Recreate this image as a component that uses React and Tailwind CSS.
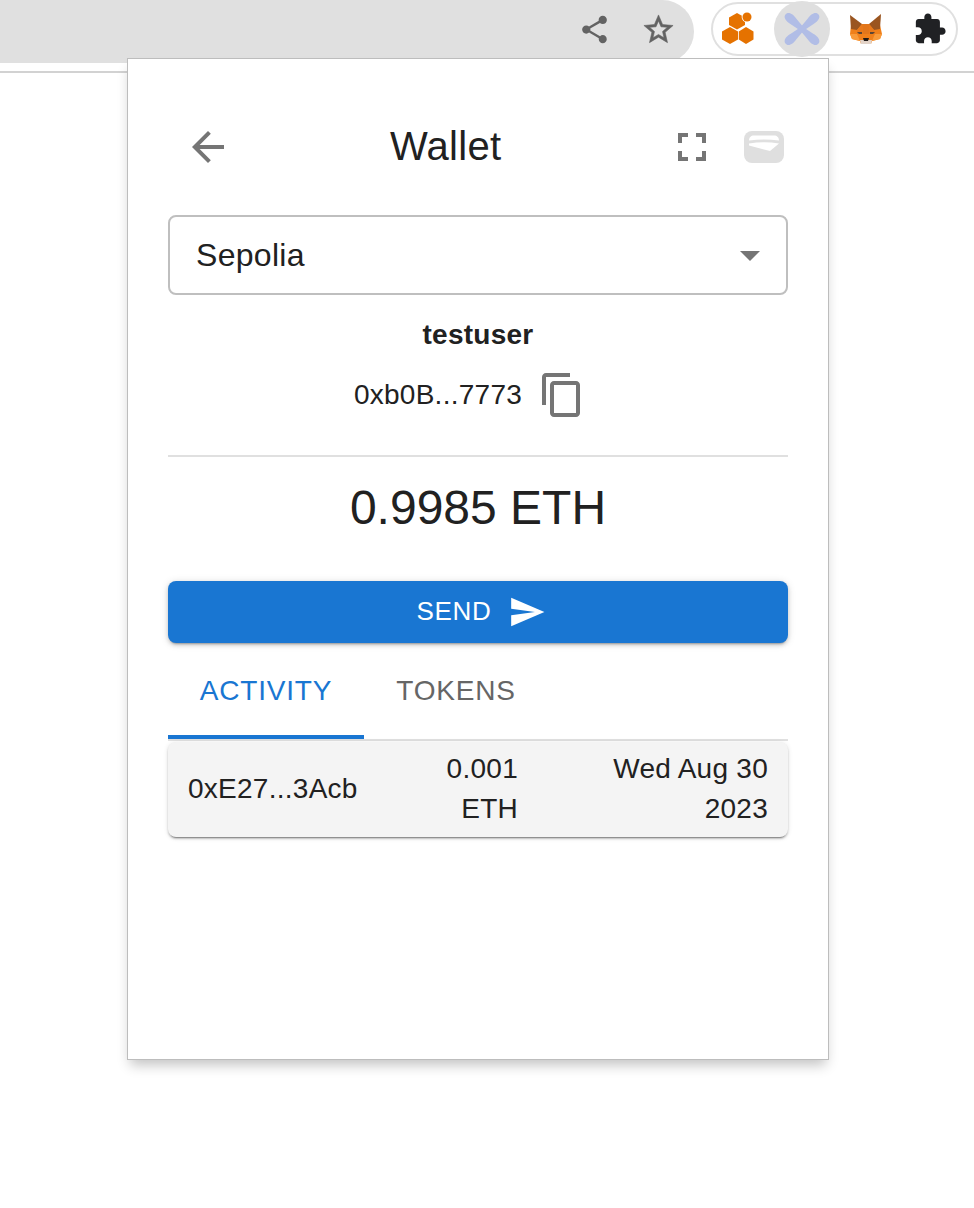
import React from "react";

const Icon = ({ d, className, bold }) => (
  <svg viewBox="0 0 24 24" className={className} fill="currentColor" stroke={bold ? "currentColor" : "none"} strokeWidth={bold ? 0.4 : 0}>
    <path d={d} />
  </svg>
);

const P = {
  back: "M20 11H7.83l5.59-5.59L12 4l-8 8 8 8 1.41-1.41L7.83 13H20v-2z",
  full: "M7 14H5v5h5v-2H7v-3zm-2-4h2V7h3V5H5v5zm12 7h-3v2h5v-5h-2v3zM14 5v2h3v3h2V5h-5z",
  copy: "M16 1H4c-1.1 0-2 .9-2 2v14h2V3h12V1zm3 4H8c-1.1 0-2 .9-2 2v14c0 1.1.9 2 2 2h11c1.1 0 2-.9 2-2V7c0-1.1-.9-2-2-2zm0 16H8V7h11v14z",
  send: "M2.01 21 23 12 2.01 3 2 10l15 2-15 2z",
  share:
    "M18 16.08c-.76 0-1.44.3-1.96.77L8.91 12.7c.05-.23.09-.46.09-.7s-.04-.47-.09-.7l7.05-4.11c.54.5 1.25.81 2.04.81 1.66 0 3-1.34 3-3s-1.34-3-3-3-3 1.34-3 3c0 .24.04.47.09.7L8.04 9.81C7.5 9.31 6.79 9 6 9c-1.66 0-3 1.34-3 3s1.34 3 3 3c.79 0 1.5-.31 2.04-.81l7.12 4.16c-.05.21-.08.43-.08.65 0 1.61 1.31 2.92 2.92 2.92s2.92-1.31 2.92-2.92c0-1.61-1.31-2.92-2.92-2.92z",
  star: "M22 9.24l-7.19-.62L12 2 9.19 8.63 2 9.24l5.46 4.73L5.82 21 12 17.27 18.18 21l-1.63-7.03L22 9.24zM12 15.4l-3.76 2.27 1-4.28-3.32-2.88 4.38-.38L12 6.1l1.71 4.04 4.38.38-3.32 2.88 1 4.28L12 15.4z",
  puzzle:
    "M20.5 11H19V7c0-1.1-.9-2-2-2h-4V3.5C13 2.12 11.88 1 10.5 1S8 2.12 8 3.5V5H4c-1.1 0-1.99.9-1.99 2v3.8H3.5c1.49 0 2.7 1.21 2.7 2.7s-1.21 2.7-2.7 2.7H2V20c0 1.1.9 2 2 2h3.8v-1.5c0-1.49 1.21-2.7 2.7-2.7 1.49 0 2.7 1.21 2.7 2.7V22H17c1.1 0 2-.9 2-2v-4h1.5c1.38 0 2.5-1.12 2.5-2.5S21.88 11 20.5 11z",
};

const HexLogo = () => (
  <svg viewBox="0 0 36 36" className="h-9 w-9" fill="#e57200">
    <polygon points="17,2 25,6.500 25,14 17,18.500 9,14 9,6.500" />
    <polygon points="10,16 18,20.500 18,28.500 10,33 2,28.500 2,20.500" />
    <polygon points="26,16 33.500,20.500 33.500,28.500 26,33 18.800,28.500 18.800,20.500" />
    <circle cx="27" cy="6" r="5.400" fill="#ffffff" />
    <circle cx="27" cy="6" r="4.500" />
  </svg>
);

const ARM = "M-22 0C-22-4.500-16-5-12-4L0-2.200 12-4C16-5 22-4.500 22 0 22 4.500 16 5 12 4L0 2.200-12 4C-16 5-22 4.500-22 0z";

const XLogo = () => (
  <svg viewBox="-20 -18 40 36" className="h-9 w-10" fill="#b1bde6">
    <path d={ARM} transform="rotate(42)" />
    <path d={ARM} transform="rotate(-42)" />
  </svg>
);

const Fox = () => (
  <svg viewBox="0 0 34 30" className="h-[30px] w-[34px]">
    <polygon points="12,10 21,10 31,11 33,20 31,25 23,27 22,30 12,30 11,27 3,25 1,20 2,11" fill="#f0801a" />
    <polygon points="1,1 13,10 8,16 2,15" fill="#9a5520" />
    <polygon points="32,0 20,10 25,16 31,15" fill="#9a5520" />
    <polygon points="13,10 20,10 20,20 14,20" fill="#e2761b" />
    <polygon points="8,16 13,10 14,20 8,20" fill="#e8791c" />
    <polygon points="25,16 20,10 20,20 26,20" fill="#e8791c" />
    <polygon points="8,18 13,18 13,20 10,20" fill="#5b4636" />
    <polygon points="26,18 21,18 21,20 24,20" fill="#5b4636" />
    <polygon points="1,20 3,25 11,27 8,20" fill="#f99b3a" />
    <polygon points="33,20 31,25 23,27 26,20" fill="#f99b3a" />
    <polygon points="11,26 23,26 22,30 12,30" fill="#e2d3c8" />
    <polygon points="14,24 20,24 19,27 15,27" fill="#1f1a17" />
  </svg>
);

const WalletIcon = () => (
  <svg viewBox="0 0 40 32" className="h-8 w-10">
    <rect width="40" height="32" rx="8" fill="#dfdfdf" />
    <path d="M5 9.500C5 6.500 7 4.500 10 4.500H30C33 4.500 35 6.500 35 9.500Q20 7.500 5 9.500z" fill="#ffffff" />
    <path d="M5 12.500Q20 10 35 12.500L26 20 5 14.500z" fill="#ffffff" />
  </svg>
);

export default function App() {
  return (
    <div className="relative h-[1208px] w-[974px] overflow-hidden bg-white font-['Liberation_Sans',Arial,sans-serif] text-[#212121]">
      <header className="flex h-[73px] items-start border-b-2 border-[#d2d2d2]">
        <div className="flex h-[63px] w-[694px] items-center justify-end gap-[30px] rounded-r-[34px] bg-[#e0e0e0] pr-[18px] pb-[4px] text-[#636363]">
          <Icon d={P.share} className="h-[33px] w-[33px]" />
          <Icon d={P.star} bold className="h-[35px] w-[35px]" />
        </div>
        <div className="mt-[2px] ml-[17px] flex h-[54px] w-[247px] items-center rounded-full border-2 border-[#e0e0e0] pl-[7px]">
          <div className="flex w-[54px] justify-start">
            <HexLogo />
          </div>
          <div className="flex h-14 w-14 shrink-0 items-center justify-center rounded-full bg-[#dfdfdf]">
            <XLogo />
          </div>
          <div className="ml-[19px]">
            <Fox />
          </div>
          <Icon d={P.puzzle} className="ml-[30px] h-[34px] w-[34px] text-[#202124]" />
        </div>
      </header>

      <main className="absolute top-[58px] left-[127px] flex h-[1002px] w-[702px] flex-col border border-[#bdbdbd] bg-white px-[40px] shadow-[0_8px_12px_-3px_rgba(0,0,0,0.24)]">
        <div className="mt-[64px] flex h-[48px] items-center">
          <Icon d={P.back} className="ml-[16px] h-12 w-12 text-[#757575]" />
          <h1 className="mb-[2px] ml-[158px] text-[40px] leading-[48px] font-normal tracking-[0.3px]">Wallet</h1>
          <Icon d={P.full} className="ml-[167px] h-12 w-12 text-[#757575]" />
          <div className="ml-[28px]">
            <WalletIcon />
          </div>
        </div>

        <div className="mt-[44px] flex h-[80px] items-center justify-between rounded-[8px] border-2 border-[#bfbfbf] pr-[26px] pl-[26px] text-[32px] tracking-[0.00938em]">
          <span>Sepolia</span>
          <span className="mt-[1px] h-0 w-0 border-x-[10px] border-t-[10px] border-x-transparent border-t-[#757575]"></span>
        </div>

        <div className="mt-[20px] text-center text-[28px] leading-[40px] font-bold tracking-[0.00938em]">testuser</div>

        <div className="mt-[16px] flex h-[48px] items-center justify-center pr-[16px] text-[28px] tracking-[0.00938em]">
          <span>0xb0B...7773</span>
          <Icon d={P.copy} className="ml-[16px] h-12 w-12 text-[#757575]" />
        </div>

        <div className="mt-[36px] h-[2px] bg-[#e0e0e0]"></div>

        <div className="mt-[23px] text-center text-[48px] leading-[56px]">0.9985 ETH</div>

        <button className="mt-[45px] flex h-[62px] items-center justify-center rounded-[8px] bg-[#1976d2] pl-[6px] text-[26px] tracking-[0.02857em] text-white shadow-[0_3px_2px_-2px_rgba(0,0,0,0.25),0_2px_4px_0_rgba(0,0,0,0.16),0_1px_8px_0_rgba(0,0,0,0.12)]">
          <span className="mb-[2px]">SEND</span>
          <Icon d={P.send} className="ml-[16px] h-[38px] w-[38px]" />
        </button>

        <div className="flex h-[98px] border-b-2 border-[#e0e0e0] text-[28px] tracking-[0.02857em]">
          <div className="flex h-[96px] w-[196px] shrink-0 items-center justify-center border-b-4 border-[#1976d2] pt-[4px] text-[#1976d2]">ACTIVITY</div>
          <div className="flex h-[96px] w-[184px] items-center justify-center text-[#666666]">TOKENS</div>
        </div>

        <div className="mt-px flex h-[95px] items-center rounded-[8px] bg-[#f4f4f4] px-[20px] pb-[2px] text-[28px] leading-[40px] tracking-[0.00938em] shadow-[0_3px_1px_-2px_rgba(0,0,0,0.3),0_2px_2px_0_rgba(0,0,0,0.18),0_1px_5px_0_rgba(0,0,0,0.12)]">
          <div className="w-[210px] shrink-0">0xE27...3Acb</div>
          <div className="w-[120px] shrink-0 text-right">0.001 ETH</div>
          <div className="flex-1 pl-[50px] text-right">Wed Aug 30 2023</div>
        </div>
      </main>
    </div>
  );
}
